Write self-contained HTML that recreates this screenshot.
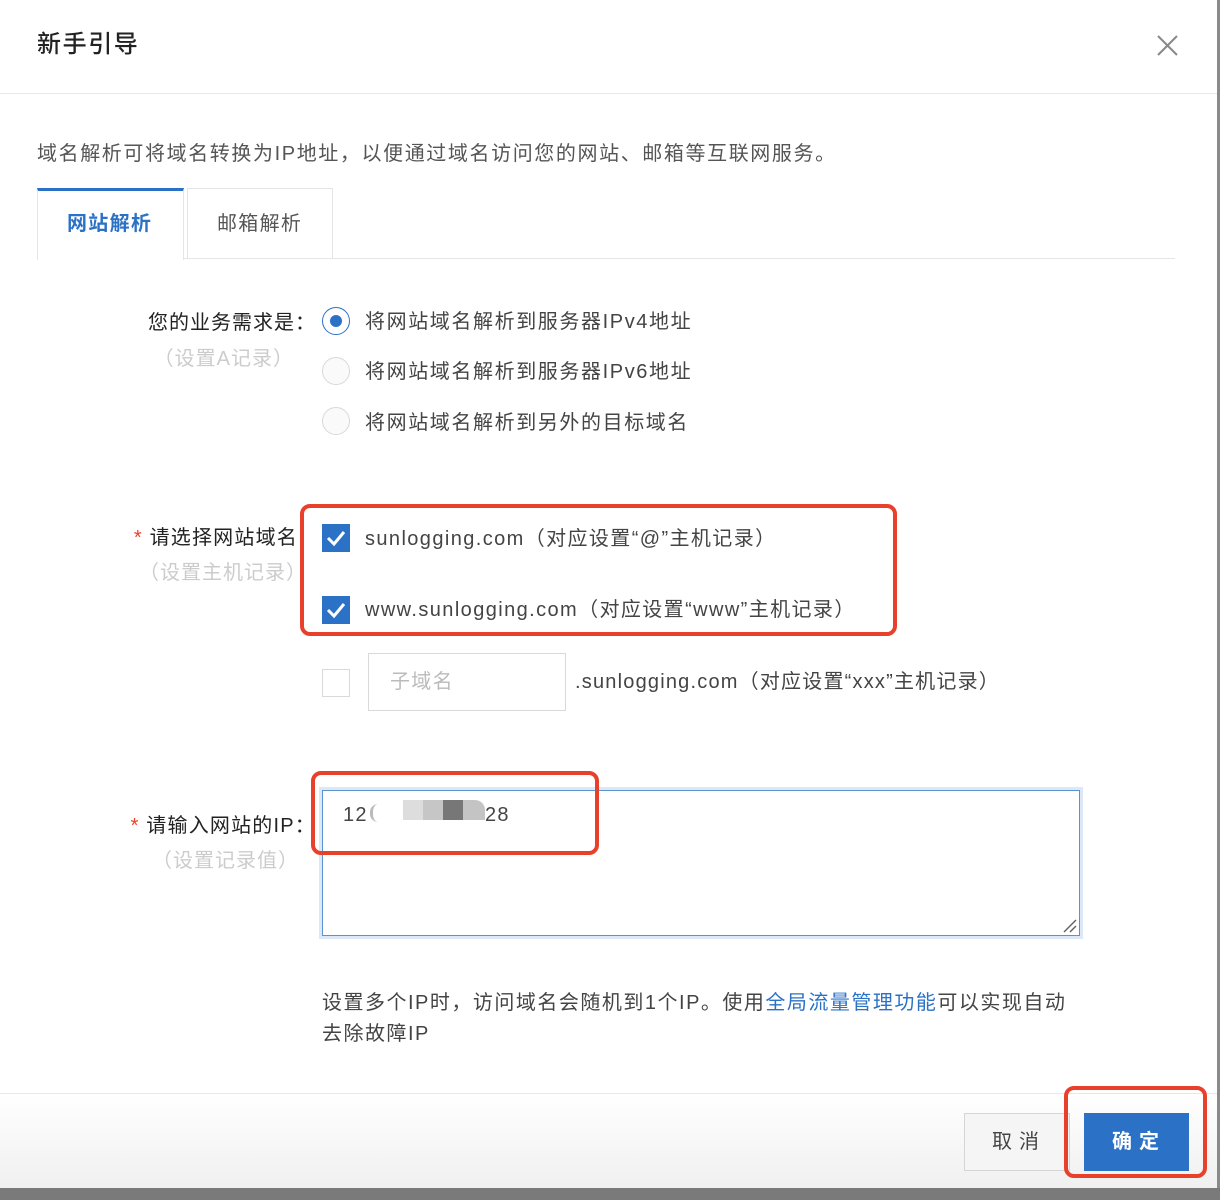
<!DOCTYPE html>
<html><head><meta charset="utf-8"><style>
*{margin:0;padding:0;box-sizing:border-box}
body{width:1220px;height:1200px;position:relative;background:#fff;font-family:"Liberation Sans","Noto Sans CJK SC",sans-serif;color:#333;overflow:hidden}
.a{position:absolute;white-space:nowrap}
.t20{font-size:20px;line-height:24px;letter-spacing:1.3px}
.gray{color:#ccc}
.radio{position:absolute;width:28px;height:28px;border-radius:50%;border:1px solid #d9d9d9;background:#fafafa}
.cb{position:absolute;width:28px;height:28px;background:#2b72c7}
.cb svg{position:absolute;left:4px;top:5px}
.red{position:absolute;border:4px solid #e8402a;border-radius:10px}
</style></head><body>
<div class="a" style="left:37px;top:30px;font-size:24px;line-height:30px;color:#222;font-weight:500;letter-spacing:1.6px">新手引导</div>
<svg class="a" style="left:1157px;top:35px" width="21" height="21" viewBox="0 0 21 21"><path d="M1 1L20 20M20 1L1 20" stroke="#888" stroke-width="2"/></svg>
<div class="a" style="left:0;top:93px;width:1218px;height:1px;background:#e8e8e8"></div>
<div class="a" style="left:1217px;top:0;width:3px;height:1200px;background:#8a8a8a"></div>

<div class="a t20" style="left:37px;top:142px;color:#555;letter-spacing:1.6px">域名解析可将域名转换为IP地址，以便通过域名访问您的网站、邮箱等互联网服务。</div>

<div class="a" style="left:37px;top:258px;width:1138px;height:1px;background:#e5e5e5"></div>
<div class="a" style="left:37px;top:188px;width:147px;height:72px;background:#fff;border:1px solid #e5e5e5;border-top:3px solid #2b72c7;border-bottom:none"></div>
<div class="a t20" style="left:67px;top:212px;color:#2b72c7;font-weight:bold">网站解析</div>
<div class="a" style="left:187px;top:188px;width:146px;height:71px;border:1px solid #e5e5e5;background:#fff"></div>
<div class="a t20" style="left:217px;top:212px;color:#555">邮箱解析</div>

<div class="a t20" style="right:904px;top:311px;color:#222;letter-spacing:1px">您的业务需求是：</div>
<div class="a t20 gray" style="right:926px;top:347px;letter-spacing:1px">（设置A记录）</div>
<div class="radio" style="left:322px;top:307px;border-color:#2b72c7;background:#fff"><div style="position:absolute;left:7px;top:7px;width:12px;height:12px;border-radius:50%;background:#2b72c7"></div></div>
<div class="a t20" style="left:365px;top:310px;color:#444;letter-spacing:1.6px">将网站域名解析到服务器IPv4地址</div>
<div class="radio" style="left:322px;top:357px"></div>
<div class="a t20" style="left:365px;top:360px;color:#444;letter-spacing:1.6px">将网站域名解析到服务器IPv6地址</div>
<div class="radio" style="left:322px;top:407px"></div>
<div class="a t20" style="left:365px;top:411px;color:#444;letter-spacing:1.6px">将网站域名解析到另外的目标域名</div>

<div class="a t20" style="right:922px;top:526px;color:#222;letter-spacing:1.2px"><span style="color:#e8402a">*</span> 请选择网站域名</div>
<div class="a t20 gray" style="right:913px;top:561px;letter-spacing:1px">（设置主机记录）</div>
<div class="cb" style="left:322px;top:524px"><svg width="20" height="18"><path d="M2 9L8 15L18 3" stroke="#fff" stroke-width="3" fill="none"/></svg></div>
<div class="a t20" style="left:365px;top:527px;color:#444;letter-spacing:1.4px">sunlogging.com（对应设置“@”主机记录）</div>
<div class="cb" style="left:322px;top:596px"><svg width="20" height="18"><path d="M2 9L8 15L18 3" stroke="#fff" stroke-width="3" fill="none"/></svg></div>
<div class="a t20" style="left:365px;top:598px;color:#444;letter-spacing:1.4px">www.sunlogging.com（对应设置“www”主机记录）</div>
<div class="red" style="left:300px;top:504px;width:597px;height:132px"></div>

<div class="a" style="left:322px;top:669px;width:28px;height:28px;border:1px solid #d9d9d9"></div>
<div class="a" style="left:368px;top:653px;width:198px;height:58px;border:1px solid #d9d9d9"></div>
<div class="a t20 gray" style="left:390px;top:670px;color:#bbb">子域名</div>
<div class="a t20" style="left:575px;top:670px;color:#444;letter-spacing:1.2px">.sunlogging.com（对应设置“xxx”主机记录）</div>

<div class="a t20" style="right:904px;top:814px;color:#222;letter-spacing:1.2px"><span style="color:#e8402a">*</span> 请输入网站的IP：</div>
<div class="a t20 gray" style="right:921px;top:849px;letter-spacing:1px">（设置记录值）</div>
<div class="a" style="left:319px;top:787px;width:764px;height:152px;border:3px solid #dce8f7"></div>
<div class="a" style="left:322px;top:790px;width:758px;height:146px;border:1px solid #5b93cf;background:#fff"></div>
<svg class="a" style="left:1062px;top:918px" width="16" height="16"><path d="M2 14L14 2M8 14L14 8" stroke="#666" stroke-width="1.5"/></svg>
<div class="a t20" style="left:343px;top:803px;color:#444">12</div>
<div class="a" style="left:370px;top:804px;width:8px;height:18px;border-left:3px solid #bbb;border-radius:8px 0 0 8px"></div>
<div class="a" style="left:403px;top:800px;width:20px;height:20px;background:#ddd"></div>
<div class="a" style="left:423px;top:800px;width:20px;height:20px;background:#c6c6c6"></div>
<div class="a" style="left:443px;top:800px;width:20px;height:20px;background:#777"></div>
<div class="a" style="left:463px;top:800px;width:22px;height:20px;background:#c4c4c4;border-top-right-radius:10px"></div>
<div class="a t20" style="left:485px;top:803px;color:#444">28</div>
<div class="red" style="left:311px;top:771px;width:288px;height:84px"></div>

<div class="a t20" style="left:322px;top:991px;color:#444;letter-spacing:1.5px">设置多个IP时，访问域名会随机到1个IP。使用<span style="color:#2b72c7">全局流量管理功能</span>可以实现自动</div>
<div class="a t20" style="left:322px;top:1022px;color:#444;letter-spacing:1.5px">去除故障IP</div>

<div class="a" style="left:0;top:1093px;width:1217px;height:95px;background:linear-gradient(#fff,#f0f0f0);border-top:1px solid #e8e8e8"></div>
<div class="a" style="left:964px;top:1113px;width:106px;height:58px;border:1px solid #d5d5d5;background:#f5f5f5"></div>
<div class="a t20" style="left:992px;top:1130px;color:#444;letter-spacing:7px">取消</div>
<div class="a" style="left:1084px;top:1113px;width:105px;height:58px;background:#2b72c7"></div>
<div class="a t20" style="left:1112px;top:1130px;color:#fff;letter-spacing:7px;font-weight:bold">确定</div>
<div class="red" style="left:1064px;top:1086px;width:143px;height:92px"></div>
<div class="a" style="left:0;top:1188px;width:1220px;height:12px;background:#7a7a7a"></div>
</body></html>
